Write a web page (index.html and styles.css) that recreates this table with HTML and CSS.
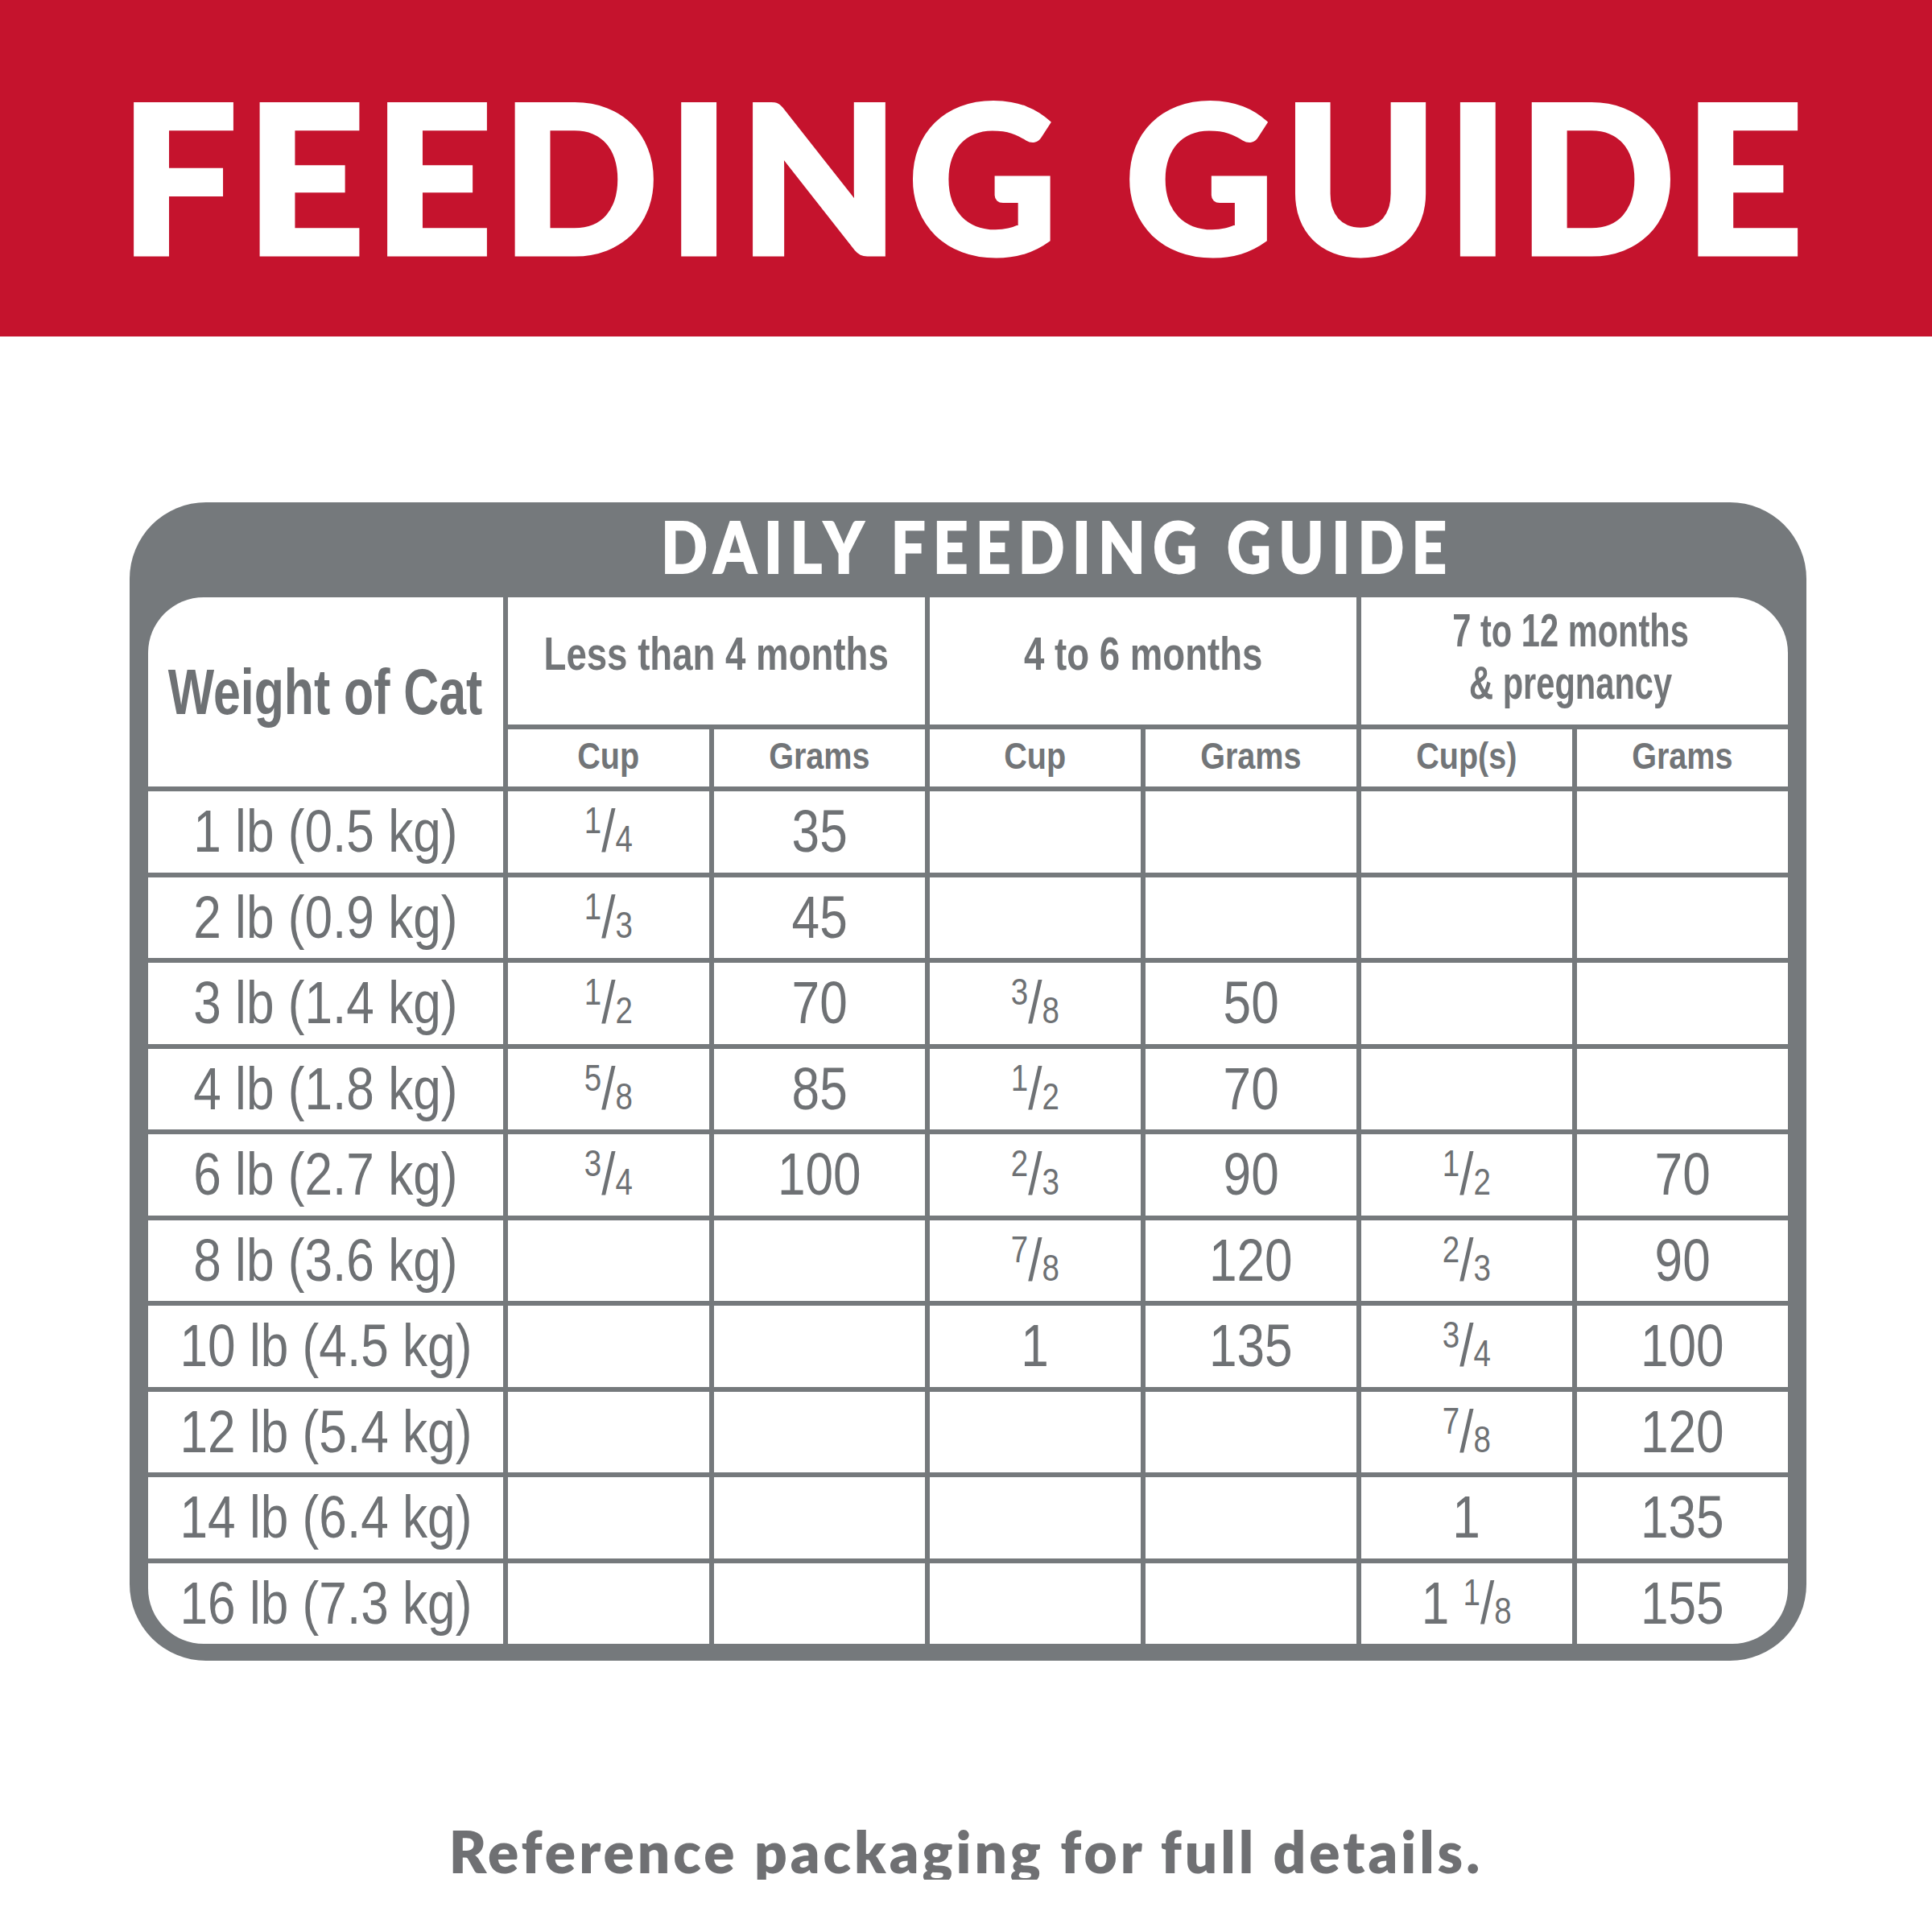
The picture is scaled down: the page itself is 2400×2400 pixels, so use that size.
FILE: index.html
```html
<!DOCTYPE html>
<html lang="en">
<head>
<meta charset="utf-8">
<title>Feeding Guide</title>
<link rel="stylesheet" href="styles.css">
</head>
<body>
<header class="banner"><h1 class="title">FEEDING GUIDE</h1></header>
<section class="card">
  <h2 class="card-title"><span class="ct">DAILY FEEDING GUIDE</span></h2>
  <div class="grid">
    <div class="cell head weight"><span class="t">Weight of Cat</span></div>
    <div class="cell head group"><span class="t">Less than 4 months</span></div>
    <div class="cell head group"><span class="t">4 to 6 months</span></div>
    <div class="cell head group g3"><span class="t">7 to 12 months<br>&amp; pregnancy</span></div>
    <div class="cell sub"><span class="t">Cup</span></div><div class="cell sub"><span class="t">Grams</span></div>
    <div class="cell sub"><span class="t">Cup</span></div><div class="cell sub"><span class="t">Grams</span></div>
    <div class="cell sub"><span class="t">Cup(s)</span></div><div class="cell sub"><span class="t">Grams</span></div>

    <div class="cell"><span class="t">1 lb (0.5 kg)</span></div><div class="cell"><span class="t frac"><span class="n">1</span>/<span class="d">4</span></span></div><div class="cell"><span class="t">35</span></div><div class="cell"></div><div class="cell"></div><div class="cell"></div><div class="cell"></div>
    <div class="cell"><span class="t">2 lb (0.9 kg)</span></div><div class="cell"><span class="t frac"><span class="n">1</span>/<span class="d">3</span></span></div><div class="cell"><span class="t">45</span></div><div class="cell"></div><div class="cell"></div><div class="cell"></div><div class="cell"></div>
    <div class="cell"><span class="t">3 lb (1.4 kg)</span></div><div class="cell"><span class="t frac"><span class="n">1</span>/<span class="d">2</span></span></div><div class="cell"><span class="t">70</span></div><div class="cell"><span class="t frac"><span class="n">3</span>/<span class="d">8</span></span></div><div class="cell"><span class="t">50</span></div><div class="cell"></div><div class="cell"></div>
    <div class="cell"><span class="t">4 lb (1.8 kg)</span></div><div class="cell"><span class="t frac"><span class="n">5</span>/<span class="d">8</span></span></div><div class="cell"><span class="t">85</span></div><div class="cell"><span class="t frac"><span class="n">1</span>/<span class="d">2</span></span></div><div class="cell"><span class="t">70</span></div><div class="cell"></div><div class="cell"></div>
    <div class="cell"><span class="t">6 lb (2.7 kg)</span></div><div class="cell"><span class="t frac"><span class="n">3</span>/<span class="d">4</span></span></div><div class="cell"><span class="t">100</span></div><div class="cell"><span class="t frac"><span class="n">2</span>/<span class="d">3</span></span></div><div class="cell"><span class="t">90</span></div><div class="cell"><span class="t frac"><span class="n">1</span>/<span class="d">2</span></span></div><div class="cell"><span class="t">70</span></div>
    <div class="cell"><span class="t">8 lb (3.6 kg)</span></div><div class="cell"></div><div class="cell"></div><div class="cell"><span class="t frac"><span class="n">7</span>/<span class="d">8</span></span></div><div class="cell"><span class="t">120</span></div><div class="cell"><span class="t frac"><span class="n">2</span>/<span class="d">3</span></span></div><div class="cell"><span class="t">90</span></div>
    <div class="cell"><span class="t">10 lb (4.5 kg)</span></div><div class="cell"></div><div class="cell"></div><div class="cell"><span class="t">1</span></div><div class="cell"><span class="t">135</span></div><div class="cell"><span class="t frac"><span class="n">3</span>/<span class="d">4</span></span></div><div class="cell"><span class="t">100</span></div>
    <div class="cell"><span class="t">12 lb (5.4 kg)</span></div><div class="cell"></div><div class="cell"></div><div class="cell"></div><div class="cell"></div><div class="cell"><span class="t frac"><span class="n">7</span>/<span class="d">8</span></span></div><div class="cell"><span class="t">120</span></div>
    <div class="cell"><span class="t">14 lb (6.4 kg)</span></div><div class="cell"></div><div class="cell"></div><div class="cell"></div><div class="cell"></div><div class="cell"><span class="t">1</span></div><div class="cell"><span class="t">135</span></div>
    <div class="cell"><span class="t">16 lb (7.3 kg)</span></div><div class="cell"></div><div class="cell"></div><div class="cell"></div><div class="cell"></div><div class="cell"><span class="t frac">1 <span class="n">1</span>/<span class="d">8</span></span></div><div class="cell"><span class="t">155</span></div>
  </div>
</section>
<p class="note">Reference packaging for full details.</p>
</body>
</html>
```
FILE: styles.css
```css
html, body {
  margin: 0;
  padding: 0;
  background: #ffffff;
}
body {
  width: 2400px;
  font-family: "Liberation Sans", Arial, sans-serif;
  color: #6e7174;
}
.banner {
  height: 418px;
  box-sizing: border-box;
  background: #c5132d;
  padding-top: 88px;
}
.title {
  margin: 0;
  text-align: center;
  font-family: Lato, "Open Sans", sans-serif;
  font-weight: 900;
  font-size: 257px;
  line-height: 1;
  letter-spacing: 11px;
  color: #ffffff;
  -webkit-text-stroke: 5px #ffffff;
}
.card {
  margin: 206px 0 0 161px;
  width: 2083px;
  box-sizing: border-box;
  padding: 0 23px 21px 23px;
  background: #75797c;
  border-radius: 95px;
}
.card-title {
  margin: 0;
  height: 118px;
  box-sizing: border-box;
  padding: 0 0 10px 222px;
  display: flex;
  align-items: center;
  justify-content: center;
  font-family: Lato, "Open Sans", sans-serif;
  font-weight: 900;
  font-size: 88px;
  line-height: 1;
  color: #ffffff;
}
.ct {
  display: inline-block;
  letter-spacing: 11px;
  transform: scaleX(0.86);
  -webkit-text-stroke: 2px #ffffff;
}
.grid {
  display: grid;
  grid-template-columns: 441px 250px 262px 262px 262px 262px 262px;
  grid-template-rows: 158px 71px repeat(10, 100.5px);
  gap: 6px;
  background: #75797c;
  border-radius: 69px;
  overflow: hidden;
}
.cell {
  background: #ffffff;
  display: flex;
  align-items: center;
  justify-content: center;
  text-align: center;
  font-size: 74px;
  line-height: 1;
  white-space: nowrap;
}
.t {
  display: inline-block;
  transform: scaleX(0.84);
}
.head {
  font-weight: 700;
}
.weight {
  grid-row: span 2;
  font-size: 80px;
}
.weight .t {
  transform: scaleX(0.76);
}
.group {
  grid-column: span 2;
  font-size: 57px;
  line-height: 65px;
  padding-bottom: 18px;
  color: #727578;
}
.group .t {
  transform: scaleX(0.8);
}
.group.g3 {
  padding: 0 10px 10px 0;
}
.group.g3 .t {
  transform: scaleX(0.73);
}
.sub {
  font-weight: 700;
  font-size: 46px;
  padding-bottom: 6px;
  color: #727578;
}
.sub .t {
  transform: scaleX(0.86);
}
.frac .n, .frac .d {
  font-size: 0.62em;
}
.frac .n {
  vertical-align: 0.5em;
}
.note {
  margin: 201px 0 0 0;
  text-align: center;
  font-family: Lato, "Open Sans", sans-serif;
  font-weight: 800;
  font-size: 71px;
  line-height: 1;
  letter-spacing: 4px;
  color: #6f7073;
}
```
